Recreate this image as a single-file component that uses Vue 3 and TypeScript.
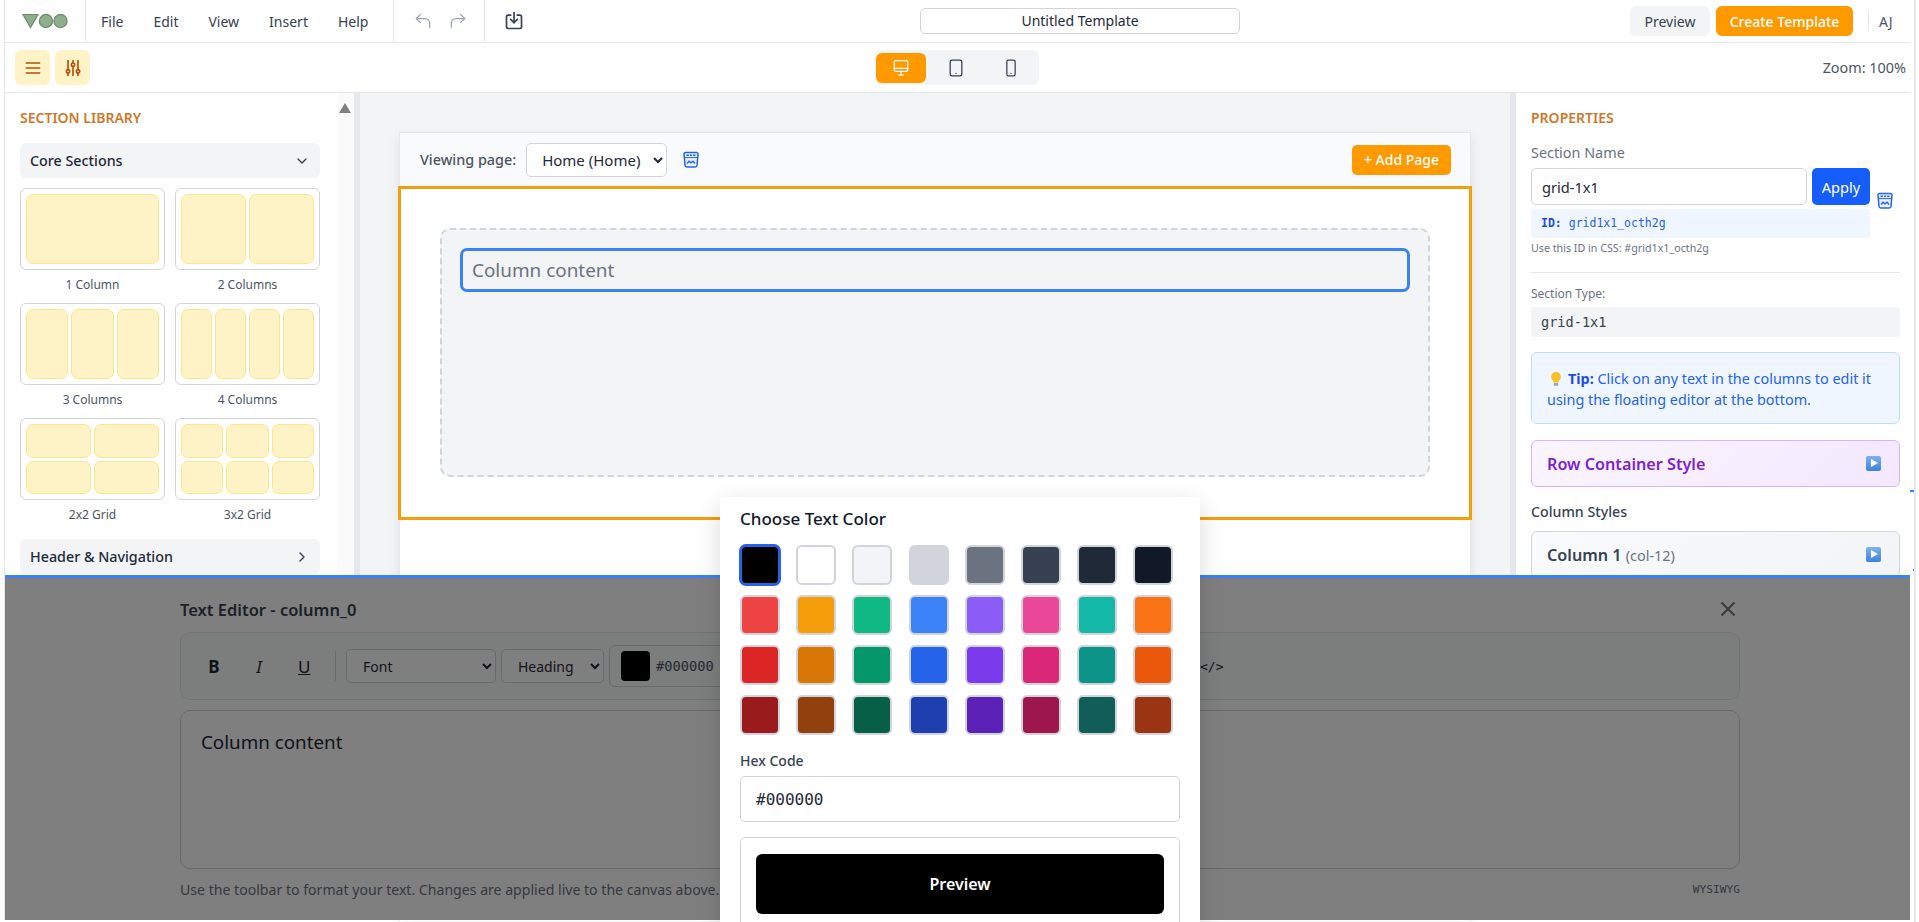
<template>
  <div class="app">
    <div class="shell">
      <!-- верхнее меню -->
      <header class="topbar">
        <div class="logo-cell">
          <svg class="logo" viewBox="0 0 46 16" width="46" height="16">
            <path d="M1 1.5 H16 L8.5 14.5 Z" fill="#8fae8b" stroke="#6f8a6b" stroke-width="1.2" />
            <circle cx="24" cy="8" r="6.6" fill="#8fae8b" stroke="#6f8a6b" stroke-width="1.2" />
            <circle cx="38.5" cy="8" r="6.6" fill="#8fae8b" stroke="#6f8a6b" stroke-width="1.2" />
          </svg>
        </div>
        <nav class="menu">
          <span v-for="item in menuItems" :key="item">{{ item }}</span>
        </nav>
        <div class="history">
          <svg viewBox="0 0 24 24" width="20" height="20" class="hist-icon">
            <path d="M9 14 4 9l5-5" />
            <path d="M4 9h10.5a5.5 5.5 0 0 1 5.5 5.5V20" />
          </svg>
          <svg viewBox="0 0 24 24" width="20" height="20" class="hist-icon">
            <path d="m15 14 5-5-5-5" />
            <path d="M20 9H9.5A5.5 5.5 0 0 0 4 14.5V20" />
          </svg>
        </div>
        <div class="save-cell">
          <svg viewBox="0 0 24 24" width="20" height="20" class="save-icon">
            <path d="M8 5H5a2 2 0 0 0-2 2v12a2 2 0 0 0 2 2h14a2 2 0 0 0 2-2V7a2 2 0 0 0-2-2h-3" />
            <path d="M12 2v12" />
            <path d="m8 10 4 4 4-4" />
          </svg>
        </div>
        <div class="title-wrap">
          <div class="title-box">Untitled Template</div>
        </div>
        <div class="top-actions">
          <button class="btn-soft">Preview</button>
          <button class="btn-orange">Create Template</button>
          <span class="avatar">AJ</span>
        </div>
      </header>

      <!-- вторая панель -->
      <div class="toolbar">
        <div class="panel-toggles">
          <button class="toggle">
            <svg viewBox="0 0 24 24" width="20" height="20" class="tool-icon">
              <path d="M4 6h16M4 12h16M4 18h16" />
            </svg>
          </button>
          <button class="toggle">
            <svg viewBox="0 0 24 24" width="20" height="20" class="tool-icon">
              <path d="M6 3v11M6 18v3M12 3v3M12 10v11M18 3v11M18 18v3" />
              <circle cx="6" cy="16" r="2" />
              <circle cx="12" cy="8" r="2" />
              <circle cx="18" cy="16" r="2" />
            </svg>
          </button>
        </div>
        <div class="devices">
          <button class="device active">
            <svg viewBox="0 0 24 24" width="20" height="20" class="device-icon">
              <rect x="4" y="3" width="16" height="13" rx="1.5" />
              <path d="M4 12.5h16M9 20.5h6M12 16v4.5" />
            </svg>
          </button>
          <button class="device">
            <svg viewBox="0 0 24 24" width="20" height="20" class="device-icon">
              <rect x="5" y="2.5" width="14" height="19" rx="2" />
              <path d="M12 18.5h.01" />
            </svg>
          </button>
          <button class="device">
            <svg viewBox="0 0 24 24" width="20" height="20" class="device-icon">
              <rect x="7" y="2.5" width="10" height="19" rx="2" />
              <path d="M12 18.5h.01" />
            </svg>
          </button>
        </div>
        <span class="zoom-label">Zoom: 100%</span>
      </div>

      <div class="main">
        <!-- библиотека секций -->
        <aside class="library">
          <div class="lib-scroll">
            <h2 class="panel-title">SECTION LIBRARY</h2>
            <div class="acc-head">
              <span>Core Sections</span>
              <svg viewBox="0 0 24 24" width="16" height="16" class="chev"><path d="m6 9 6 6 6-6" /></svg>
            </div>
            <div class="layouts">
              <div v-for="l in layouts" :key="l.label" class="layout">
                <div class="layout-card" :style="{ gridTemplateColumns: `repeat(${l.cols}, 1fr)` }">
                  <span v-for="n in l.cells" :key="n" class="cell"></span>
                </div>
                <div class="layout-label">{{ l.label }}</div>
              </div>
            </div>
            <div class="acc-head second">
              <span>Header &amp; Navigation</span>
              <svg viewBox="0 0 24 24" width="16" height="16" class="chev"><path d="m9 6 6 6-6 6" /></svg>
            </div>
          </div>
          <div class="track"><span class="track-arrow"></span></div>
        </aside>

        <!-- холст -->
        <section class="canvas">
          <div class="frame">
            <div class="frame-head">
              <label class="viewing">Viewing page:</label>
              <select class="page-select">
                <option>Home (Home)</option>
              </select>
              <svg viewBox="0 0 18 18" width="18" height="18" class="css-icon">
                <path d="M3.5 1.5h11a1.5 1.5 0 0 1 1.5 1.6l-1 11.4a1.8 1.8 0 0 1-1.8 1.5H4.8a1.8 1.8 0 0 1-1.8-1.5L2 3.1a1.5 1.5 0 0 1 1.5-1.6z" fill="#e8f0fe" stroke="#2563eb" stroke-width="1.5" />
                <path d="M2.5 6.6h13" stroke="#2563eb" stroke-width="1" />
                <path d="M5 12.5l2-2.2 2 1.6 2-1.6 2 2.2" fill="none" stroke="#2563eb" stroke-width="1.4" />
                <path d="M4.5 4.2h2.4M7.9 4.2h2.2M11.1 4.2h2.4" stroke="#2563eb" stroke-width="1.5" />
              </svg>
              <button class="btn-add">+ Add Page</button>
            </div>
            <div class="grid-section">
              <div class="dashed">
                <div class="editable">Column content</div>
              </div>
            </div>
          </div>
        </section>

        <!-- свойства -->
        <aside class="props">
          <h2 class="panel-title">PROPERTIES</h2>
          <div class="field-label">Section Name</div>
          <div class="name-row">
            <input class="name-input" value="grid-1x1" />
            <button class="btn-apply">Apply</button>
            <svg viewBox="0 0 18 18" width="18" height="18" class="css-icon css-float">
              <path d="M3.5 1.5h11a1.5 1.5 0 0 1 1.5 1.6l-1 11.4a1.8 1.8 0 0 1-1.8 1.5H4.8a1.8 1.8 0 0 1-1.8-1.5L2 3.1a1.5 1.5 0 0 1 1.5-1.6z" fill="#e8f0fe" stroke="#2563eb" stroke-width="1.5" />
              <path d="M2.5 6.6h13" stroke="#2563eb" stroke-width="1" />
              <path d="M5 12.5l2-2.2 2 1.6 2-1.6 2 2.2" fill="none" stroke="#2563eb" stroke-width="1.4" />
              <path d="M4.5 4.2h2.4M7.9 4.2h2.2M11.1 4.2h2.4" stroke="#2563eb" stroke-width="1.5" />
            </svg>
          </div>
          <div class="id-box"><b>ID:</b> grid1x1_octh2g</div>
          <div class="id-hint">Use this ID in CSS: #grid1x1_octh2g</div>
          <hr class="rule" />
          <div class="type-label">Section Type:</div>
          <div class="type-box">grid-1x1</div>
          <div class="tip">
            <svg viewBox="0 0 16 18" width="14" height="16" class="bulb">
              <path d="M8 1a5.5 5.5 0 0 0-3 10.1V13h6v-1.9A5.5 5.5 0 0 0 8 1z" fill="#fbbf24" />
              <rect x="5.4" y="13.6" width="5.2" height="3" rx="1" fill="#9ca3af" />
            </svg>
            <b>Tip:</b> Click on any text in the columns to edit it using the floating editor at the bottom.
          </div>
          <div class="style-row purple">
            <span>Row Container Style</span>
            <span class="play"></span>
          </div>
          <div class="col-styles">Column Styles</div>
          <div class="style-row gray">
            <span>Column 1 <small>(col-12)</small></span>
            <span class="play"></span>
          </div>
        </aside>
      </div>

      <!-- плавающий редактор -->
      <div class="editor">
        <div class="editor-inner">
          <div class="editor-head">
            <span class="editor-title">Text Editor - column_0</span>
            <svg viewBox="0 0 16 16" width="16" height="16" class="close"><path d="M1.5 1.5l13 13M14.5 1.5l-13 13" /></svg>
          </div>
          <div class="editor-tools">
            <span class="fmt bold">B</span>
            <span class="fmt ital">I</span>
            <span class="fmt under">U</span>
            <span class="tool-sep"></span>
            <select class="ed-select font-sel"><option>Font</option></select>
            <select class="ed-select head-sel"><option>Heading</option></select>
            <div class="color-pick">
              <span class="color-chip"></span>
              <span class="color-hex">#000000</span>
            </div>
            <span class="code-btn">&lt;/&gt;</span>
          </div>
          <div class="editor-area">Column content</div>
          <div class="editor-foot">
            <span>Use the toolbar to format your text. Changes are applied live to the canvas above.</span>
            <span class="mode">WYSIWYG</span>
          </div>
        </div>
        <div class="dim"></div>
      </div>

      <!-- выбор цвета -->
      <div class="color-modal">
        <h3 class="modal-title">Choose Text Color</h3>
        <div class="swatches">
          <span
            v-for="(c, i) in swatches"
            :key="c"
            class="swatch"
            :class="{ picked: i === 0 }"
            :style="{ background: c }"
          ></span>
        </div>
        <div class="hex-label">Hex Code</div>
        <input class="hex-input" value="#000000" />
        <div class="preview-box">
          <div class="preview-fill">Preview</div>
        </div>
      </div>

      <span class="tick tick-a"></span>
      <span class="tick tick-b"></span>
    </div>
    <span class="edge"></span>
  </div>
</template>

<script setup lang="ts">
const menuItems: string[] = ['File', 'Edit', 'View', 'Insert', 'Help'];

const layouts = [
  { label: '1 Column', cols: 1, cells: 1 },
  { label: '2 Columns', cols: 2, cells: 2 },
  { label: '3 Columns', cols: 3, cells: 3 },
  { label: '4 Columns', cols: 4, cells: 4 },
  { label: '2x2 Grid', cols: 2, cells: 4 },
  { label: '3x2 Grid', cols: 3, cells: 6 }
];

const swatches: string[] = [
  '#000000', '#ffffff', '#f3f4f6', '#d1d5db', '#6b7280', '#374151', '#1f2937', '#111827',
  '#ef4444', '#f59e0b', '#10b981', '#3b82f6', '#8b5cf6', '#ec4899', '#14b8a6', '#f97316',
  '#dc2626', '#d97706', '#059669', '#2563eb', '#7c3aed', '#db2777', '#0d9488', '#ea580c',
  '#991b1b', '#92400e', '#065f46', '#1e40af', '#5b21b6', '#9d174d', '#115e59', '#9a3412'
];
</script>

<style>
html,
body {
  margin: 0;
  background: #fff;
}
</style>

<style scoped>
.app {
  position: relative;
  display: flex;
  width: 1919px;
  height: 922px;
  padding-left: 4px;
  box-sizing: border-box;
  overflow: hidden;
  background: #fff;
  font-family: "Noto Sans", sans-serif;
  color: #111827;
}

.shell {
  position: relative;
  display: flex;
  flex-direction: column;
  width: 1906px;
  height: 920px;
  box-sizing: border-box;
  border-left: 1px solid #e5e7eb;
  flex: none;
}

.edge {
  width: 2px;
  margin-left: 4px;
  background: #e5e7eb;
}

button {
  font-family: inherit;
  border: 0;
  padding: 0;
}

/* top bar */
.topbar {
  display: flex;
  align-items: stretch;
  height: 43px;
  flex: none;
  box-sizing: border-box;
  border-bottom: 1px solid #e5e7eb;
}

.logo-cell {
  display: flex;
  align-items: center;
  width: 81px;
  box-sizing: border-box;
  padding-left: 17px;
  border-right: 1px solid #e5e7eb;
  flex: none;
}

.menu {
  display: flex;
  align-items: center;
  gap: 30px;
  width: 308px;
  box-sizing: border-box;
  padding-left: 15px;
  border-right: 1px solid #e5e7eb;
  font-size: 14px;
  color: #374151;
  flex: none;
}

.history {
  display: flex;
  align-items: center;
  gap: 15px;
  width: 91px;
  box-sizing: border-box;
  padding-left: 19px;
  border-right: 1px solid #e5e7eb;
  flex: none;
}

.hist-icon,
.save-icon,
.tool-icon,
.device-icon,
.chev {
  fill: none;
  stroke-linecap: round;
  stroke-linejoin: round;
}

.hist-icon {
  stroke: #9ca3af;
  stroke-width: 1.5;
}

.save-cell {
  display: flex;
  align-items: center;
  padding-left: 19px;
  width: 60px;
  flex: none;
}

.save-icon {
  stroke: #374151;
  stroke-width: 2;
}

.title-wrap {
  display: flex;
  align-items: center;
  padding-left: 356px;
  flex: 1;
}

.title-box {
  width: 320px;
  height: 26px;
  box-sizing: border-box;
  border: 1px solid #d1d5db;
  border-radius: 5px;
  font-size: 14px;
  line-height: 24px;
  text-align: center;
  color: #1f2937;
}

.top-actions {
  display: flex;
  align-items: center;
  gap: 6px;
  flex: none;
}

.btn-soft {
  width: 80px;
  height: 30px;
  border-radius: 6px;
  background: #f3f4f6;
  font-size: 14px;
  color: #374151;
}

.btn-orange {
  width: 137px;
  height: 30px;
  border-radius: 6px;
  background: #ff9900;
  font-size: 14px;
  font-weight: 500;
  color: #fff;
}

.avatar {
  width: 41px;
  margin-left: 9px;
  margin-right: 1px;
  box-sizing: border-box;
  padding-left: 10px;
  border-left: 1px solid #e5e7eb;
  font-size: 14px;
  color: #4b5563;
}

/* second bar */
.toolbar {
  display: flex;
  align-items: center;
  height: 50px;
  flex: none;
  box-sizing: border-box;
  border-bottom: 1px solid #e5e7eb;
  padding: 0 4px 0 10px;
}

.panel-toggles {
  display: flex;
  gap: 5px;
}

.toggle {
  display: flex;
  align-items: center;
  justify-content: center;
  width: 35px;
  height: 35px;
  border-radius: 6px;
  background: #fef3c7;
}

.tool-icon {
  stroke: #b45309;
  stroke-width: 2;
}

.devices {
  display: flex;
  align-items: center;
  gap: 5px;
  height: 35px;
  margin-left: 785px;
  padding: 0 3px 0 1px;
  border-radius: 6px;
  background: #f3f4f6;
}

.device {
  display: flex;
  align-items: center;
  justify-content: center;
  width: 50px;
  height: 30px;
  border-radius: 6px;
  background: transparent;
}

.device-icon {
  stroke: #374151;
  stroke-width: 1.5;
}

.device.active {
  background: #ff9900;
}

.device.active .device-icon {
  stroke: #fff;
}

.zoom-label {
  margin-left: auto;
  font-size: 14.4px;
  color: #4b5563;
}

/* main */
.main {
  display: flex;
  flex: 1;
  min-height: 0;
}

.library {
  display: flex;
  width: 355px;
  box-sizing: border-box;
  border-right: 6px solid #e5e7eb;
  flex: none;
}

.lib-scroll {
  width: 333px;
  box-sizing: border-box;
  padding: 15px 18px 0 15px;
  flex: none;
}

.panel-title {
  margin: 0;
  font-size: 14px;
  line-height: 20px;
  font-weight: 600;
  color: #d0772a;
}

.acc-head {
  display: flex;
  align-items: center;
  justify-content: space-between;
  height: 35px;
  margin-top: 15px;
  padding: 0 10px;
  box-sizing: border-box;
  border-radius: 6px;
  background: #f3f4f6;
  font-size: 14.3px;
  font-weight: 500;
  color: #1f2937;
}

.acc-head.second {
  margin-top: 16px;
}

.chev {
  stroke: #374151;
  stroke-width: 2;
}

.layouts {
  display: grid;
  grid-template-columns: 145px 145px;
  gap: 10px;
  margin-top: 10px;
}

.layout-card {
  display: grid;
  gap: 3px;
  height: 82px;
  box-sizing: border-box;
  padding: 5px;
  border: 1px solid #d1d5db;
  border-radius: 6px;
  background: #fff;
}

.cell {
  box-sizing: border-box;
  border: 1px solid #fde68a;
  border-radius: 7px;
  background: #fef3c7;
}

.layout-label {
  margin-top: 7px;
  font-size: 12px;
  line-height: 16px;
  text-align: center;
  color: #4b5563;
}

.track {
  width: 16px;
  background: #fafafa;
  flex: none;
}

.track-arrow {
  display: block;
  width: 0;
  height: 0;
  margin: 10px 0 0 1px;
  border-left: 6px solid transparent;
  border-right: 6px solid transparent;
  border-bottom: 10px solid #808080;
}

/* canvas */
.canvas {
  flex: 1;
  padding: 39px 39px 0;
  background: #f3f4f6;
  min-width: 0;
}

.frame {
  height: 100%;
  border: 1px solid #e5e7eb;
  border-bottom: 0;
  background: #fff;
  box-shadow: 0 4px 12px rgba(0, 0, 0, 0.08);
}

.frame-head {
  display: flex;
  align-items: center;
  height: 53px;
  box-sizing: border-box;
  padding: 0 19px 0 20px;
  background: #f9fafb;
}

.viewing {
  font-size: 14.4px;
  font-weight: 500;
  color: #4b5563;
}

.page-select {
  width: 141px;
  height: 34px;
  margin-left: 10px;
  padding: 0 6px 0 11px;
  border: 1px solid #d1d5db;
  border-radius: 5px;
  background: #fff;
  font-family: inherit;
  font-size: 15px;
  color: #1f2937;
}

.css-icon {
  flex: none;
}

.frame-head .css-icon {
  margin-left: 15px;
}

.btn-add {
  width: 99px;
  height: 30px;
  margin-left: auto;
  border-radius: 5px;
  background: #ff9900;
  font-size: 14px;
  font-weight: 500;
  color: #fff;
}

.grid-section {
  height: 334px;
  margin: 0 -2px;
  box-sizing: border-box;
  padding: 39px 39px 40px;
  border: 3px solid #f59e0b;
}

.dashed {
  height: 100%;
  box-sizing: border-box;
  padding: 18px;
  border: 2px dashed #d1d5db;
  border-radius: 10px;
  background: #f3f4f6;
}

.editable {
  height: 44px;
  box-sizing: border-box;
  padding: 0 9px;
  border: 3px solid #3b82f6;
  border-radius: 7px;
  font-size: 18.9px;
  line-height: 38px;
  color: #6b7280;
}

/* properties */
.props {
  width: 400px;
  box-sizing: border-box;
  padding: 15px 10px 0 15px;
  border-left: 6px solid #e5e7eb;
  flex: none;
}

.field-label {
  margin-top: 16px;
  font-size: 14.4px;
  line-height: 18px;
  color: #6b7280;
}

.name-row {
  position: relative;
  display: flex;
  gap: 5px;
  margin-top: 6px;
  width: 339px;
}

.name-input {
  flex: 1;
  min-width: 0;
  height: 37px;
  box-sizing: border-box;
  padding: 0 10px;
  border: 1px solid #d1d5db;
  border-radius: 5px;
  font-family: inherit;
  font-size: 14.6px;
  color: #1f2937;
}

.btn-apply {
  width: 58px;
  height: 37px;
  border-radius: 5px;
  background: #155dfc;
  font-size: 14.6px;
  color: #fff;
}

.css-float {
  position: absolute;
  left: 345px;
  top: 24px;
}

.id-box {
  width: 339px;
  height: 29px;
  box-sizing: border-box;
  margin-top: 4px;
  padding-left: 10px;
  border-radius: 4px;
  background: #eff6ff;
  font-family: "DejaVu Sans Mono", monospace;
  font-size: 11.5px;
  line-height: 29px;
  color: #2563eb;
}

.id-box b {
  color: #1d4ed8;
}

.id-hint {
  margin-top: 2px;
  font-size: 10.7px;
  line-height: 16px;
  color: #6b7280;
}

.rule {
  height: 1px;
  margin: 16px 0 0;
  border: 0;
  background: #e5e7eb;
}

.type-label {
  margin-top: 13px;
  font-size: 12px;
  line-height: 16px;
  color: #6b7280;
}

.type-box {
  height: 30px;
  margin-top: 5px;
  box-sizing: border-box;
  padding-left: 10px;
  border-radius: 4px;
  background: #f3f4f6;
  font-family: "DejaVu Sans Mono", monospace;
  font-size: 13.6px;
  line-height: 30px;
  color: #374151;
}

.tip {
  height: 72px;
  margin-top: 15px;
  box-sizing: border-box;
  padding: 15px 15px 0;
  border: 1px solid #bfdbfe;
  border-radius: 6px;
  background: #eff6ff;
  font-size: 14.4px;
  line-height: 21px;
  color: #2563eb;
}

.tip b {
  color: #1d4ed8;
  font-weight: 700;
}

.bulb {
  margin: 0 5px -3px 2px;
}

.style-row {
  display: flex;
  align-items: center;
  justify-content: space-between;
  height: 47px;
  margin-top: 16px;
  box-sizing: border-box;
  padding: 0 18px 0 15px;
  border-radius: 6px;
  font-size: 16.2px;
  font-weight: 600;
}

.style-row.purple {
  border: 1px solid #d8b4fe;
  background: linear-gradient(135deg, #faf5ff, #f3e8ff);
  color: #7e22ce;
}

.style-row.gray {
  margin-top: 10px;
  border: 1px solid #d1d5db;
  background: linear-gradient(135deg, #f9fafb, #f3f4f6);
  color: #374151;
}

.style-row small {
  font-size: 14.4px;
  font-weight: 400;
  color: #6b7280;
}

.play {
  position: relative;
  width: 15px;
  height: 15px;
  border-radius: 2px;
  background: linear-gradient(180deg, #7fb2ef, #3d82dc);
}

.play::after {
  content: "";
  position: absolute;
  left: 5px;
  top: 3px;
  border-left: 7px solid #fff;
  border-top: 4.5px solid transparent;
  border-bottom: 4.5px solid transparent;
}

.col-styles {
  margin-top: 16px;
  font-size: 14.2px;
  font-weight: 500;
  line-height: 18px;
  color: #374151;
}

/* editor */
.editor {
  position: absolute;
  left: 0;
  right: 0;
  top: 575px;
  bottom: 0;
  box-sizing: border-box;
  border-top: 3px solid #3b82f6;
  background: #fff;
}

.editor-inner {
  padding: 19px 170px 0 175px;
}

.editor-head {
  display: flex;
  align-items: center;
  justify-content: space-between;
  height: 24px;
  padding-right: 3px;
  margin-right: 1px;
}

.editor-title {
  font-size: 16.5px;
  font-weight: 600;
  color: #374151;
}

.close {
  fill: none;
  stroke: #6b7280;
  stroke-width: 1.9;
}

.editor-tools {
  display: flex;
  align-items: center;
  height: 68px;
  margin-top: 11px;
  box-sizing: border-box;
  padding-left: 27px;
  border: 1px solid #e5e7eb;
  border-radius: 10px;
  background: #f9fafb;
}

.fmt {
  width: 12px;
  font-size: 17px;
  text-align: center;
  color: #1f2937;
}

.fmt + .fmt {
  margin-left: 33px;
}

.bold {
  font-weight: 700;
}

.ital {
  font-style: italic;
}

.under {
  text-decoration: underline;
}

.tool-sep {
  width: 1px;
  height: 30px;
  margin: 0 10px 0 25px;
  background: #d1d5db;
}

.ed-select {
  height: 34px;
  padding: 0 2px 0 12px;
  border: 1px solid #d1d5db;
  border-radius: 5px;
  background: #fff;
  font-family: inherit;
  font-size: 14px;
  color: #1f2937;
}

.font-sel {
  width: 150px;
}

.head-sel {
  width: 103px;
  margin-left: 5px;
}

.color-pick {
  display: flex;
  align-items: center;
  gap: 6px;
  width: 180px;
  height: 42px;
  margin-left: 5px;
  box-sizing: border-box;
  padding-left: 11px;
  border: 1px solid #d1d5db;
  border-radius: 6px;
}

.color-chip {
  width: 29px;
  height: 30px;
  border-radius: 4px;
  background: #000;
}

.color-hex {
  font-family: "DejaVu Sans Mono", monospace;
  font-size: 13.7px;
  color: #4b5563;
}

.code-btn {
  margin-left: 411px;
  font-family: "DejaVu Sans Mono", monospace;
  font-size: 13px;
  color: #1f2937;
}

.editor-area {
  height: 159px;
  margin-top: 10px;
  box-sizing: border-box;
  padding: 18px 20px;
  border: 1px solid #d1d5db;
  border-radius: 10px;
  font-size: 18.8px;
  line-height: 26px;
  color: #1f2937;
}

.editor-foot {
  display: flex;
  align-items: center;
  justify-content: space-between;
  margin-top: 12px;
  font-size: 14.1px;
  line-height: 18px;
  color: #6b7280;
}

.mode {
  font-family: "DejaVu Sans Mono", monospace;
  font-size: 11.2px;
}

.dim {
  position: absolute;
  inset: 0;
  background: rgba(0, 0, 0, 0.5);
}

/* color picker */
.color-modal {
  position: absolute;
  left: 715px;
  top: 497px;
  width: 480px;
  height: 440px;
  box-sizing: border-box;
  padding: 11px 20px 0;
  background: #fff;
  box-shadow: 0 8px 24px rgba(0, 0, 0, 0.15);
}

.modal-title {
  margin: 0;
  font-size: 17px;
  line-height: 22px;
  font-weight: 500;
  color: #111827;
}

.swatches {
  display: grid;
  grid-template-columns: repeat(8, 40px);
  grid-auto-rows: 40px;
  gap: 10px 16.2px;
  margin-top: 15px;
}

.swatch {
  box-sizing: border-box;
  border: 2px solid #d1d5db;
  border-radius: 6px;
}

.swatch.picked {
  border-color: #2563eb;
  box-shadow: 0 0 0 1px #2563eb;
}

.hex-label {
  margin-top: 16px;
  font-size: 14px;
  font-weight: 500;
  line-height: 20px;
  color: #374151;
}

.hex-input {
  display: block;
  width: 100%;
  height: 46px;
  margin-top: 5px;
  box-sizing: border-box;
  padding: 0 15px;
  border: 1px solid #d1d5db;
  border-radius: 5px;
  font-family: "DejaVu Sans Mono", monospace;
  font-size: 16px;
  color: #1f2937;
}

.preview-box {
  height: 120px;
  margin-top: 15px;
  box-sizing: border-box;
  padding: 16px 15px;
  border: 1px solid #d1d5db;
  border-radius: 5px;
}

.preview-fill {
  height: 60px;
  border-radius: 6px;
  background: #000;
  font-size: 16px;
  font-weight: 600;
  line-height: 60px;
  text-align: center;
  color: #fff;
}

.tick {
  position: absolute;
  background: #3b82f6;
}

.tick-a {
  left: 1905px;
  top: 490px;
  width: 4px;
  height: 2px;
}

.tick-b {
  left: 1908px;
  top: 569px;
  width: 1px;
  height: 2px;
}
</style>
